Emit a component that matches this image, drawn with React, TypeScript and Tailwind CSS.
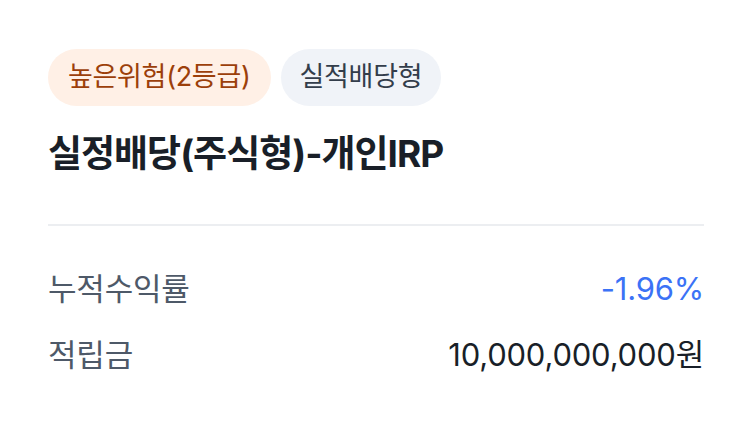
export default function App() {
  return (
    <div
      className="w-[752px] h-[431px] bg-white px-12 pt-[49px]"
      style={{ fontFamily: '"Inter", "Noto Sans CJK KR", sans-serif' }}
    >
      {/* Tags */}
      <div className="flex gap-[10px]">
        <span className="flex h-[57px] items-center rounded-full bg-[#fff0e6] px-[20px] text-[27px] tracking-[-0.3px] text-[#9c3f0a]">
          높은위험(2등급)
        </span>
        <span className="flex h-[57px] items-center rounded-full bg-[#f0f3f8] px-[19px] text-[27px] tracking-[-0.3px] text-[#333d4b]">
          실적배당형
        </span>
      </div>

      {/* Title */}
      <h1 className="mt-[24px] text-[37px] font-bold leading-[48px] tracking-[-1px] text-[#191f28]">
        실정배당(주식형)-개인IRP
      </h1>

      <div className="mt-[46px] h-[2px] bg-[#eceef1]" />

      {/* Rows */}
      <div className="mt-[43px] flex flex-col gap-[26px]">
        <div className="flex items-center justify-between leading-[40px]">
          <span className="text-[31px] tracking-[-0.2px] text-[#4e5968]">누적수익률</span>
          <span className="text-[31px] tracking-[-0.2px] text-[#3b72f6]">-1.96%</span>
        </div>
        <div className="flex items-center justify-between leading-[40px]">
          <span className="text-[31px] tracking-[-0.2px] text-[#4e5968]">적립금</span>
          <span className="text-[31px] tracking-[-0.2px] text-[#191f28]">10,000,000,000원</span>
        </div>
      </div>
    </div>
  )
}
